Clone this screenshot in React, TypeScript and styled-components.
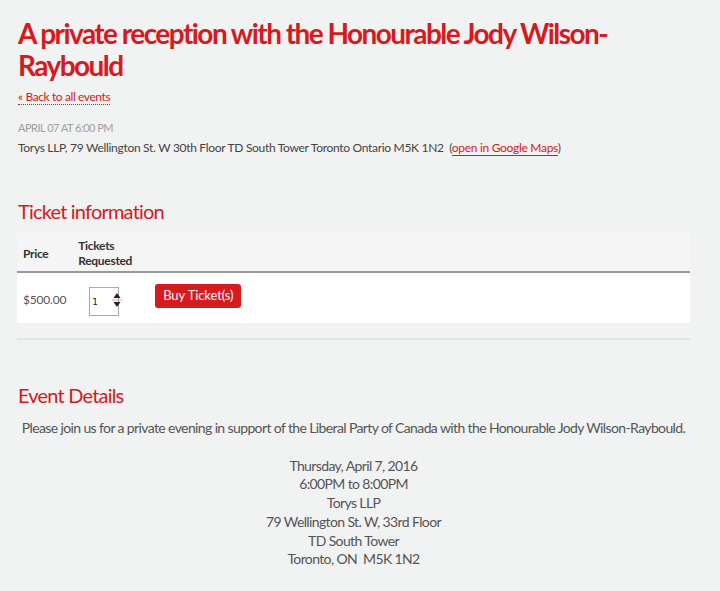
import * as React from 'react';
import styled, { createGlobalStyle } from 'styled-components';

const red = '#d71920';

const GlobalStyle = createGlobalStyle`
  html, body {
    margin: 0;
    padding: 0;
    background: #f1f2f2;
  }
  body {
    font-family: Lato, "Open Sans", sans-serif;
    color: #444;
  }
`;

const Page = styled.div`
  width: 673px;
  padding: 17px 0 20px 17px;
`;

const Title = styled.h1`
  margin: 0 0 0 1px;
  font-size: 28px;
  line-height: 32px;
  font-weight: 700;
  letter-spacing: -1.55px;
  color: ${red};
`;

const BackLink = styled.a`
  display: inline-block;
  margin: 9px 0 0 1px;
  font-size: 12px;
  line-height: 14px;
  color: ${red};
  text-decoration: none;
  letter-spacing: -0.4px;
  border-bottom: 1px dotted ${red};
`;

const Meta = styled.div`
  margin: 16px 0 0 1px;
`;

const DateLine = styled.div`
  font-size: 11px;
  line-height: 14px;
  color: #a0a0a0;
  text-transform: uppercase;
  letter-spacing: -0.5px;
`;

const Address = styled.div`
  margin-top: 5px;
  font-size: 12px;
  line-height: 16px;
  color: #444;
  letter-spacing: -0.3px;
`;

const InlineLink = styled.a`
  color: ${red};
  text-decoration: none;
  border-bottom: 1px solid ${red};
`;

const SectionTitle = styled.h2<{ $top: number }>`
  margin: ${({ $top }) => $top}px 0 0 1px;
  font-size: 20px;
  line-height: 24px;
  font-weight: 400;
  letter-spacing: -0.8px;
  color: ${red};
`;

const Table = styled.table`
  margin-top: 10px;
  width: 100%;
  border-collapse: collapse;
  font-size: 12px;
`;

const HeadRow = styled.tr`
  background: #f5f5f5;
  border-bottom: 2px solid #9a9a9a;
`;

const Th = styled.th<{ $w?: number }>`
  text-align: left;
  vertical-align: middle;
  padding: 5px 6px 3px 6px;
  width: ${({ $w }) => ($w ? `${$w}px` : 'auto')};
  font-weight: 700;
  font-size: 12px;
  line-height: 15px;
  color: #333;
  letter-spacing: -0.3px;
`;

const BodyRow = styled.tr`
  background: #fff;
  border-top: 2px solid #fff;
`;

const Td = styled.td`
  padding: 11px 6px 7px 6px;
  vertical-align: top;
  color: #555;
  font-size: 12px;
  line-height: 16px;
  letter-spacing: -0.2px;
`;

const PriceText = styled.div`
  padding-top: 8px;
`;

const QtyBox = styled.div`
  position: relative;
  display: inline-block;
  width: 30px;
  height: 29px;
  margin: 3px 0 0 11px;
  border: 1px solid #a9a9a9;
  background: #fff;
  box-sizing: border-box;
  vertical-align: top;
`;

const QtyInput = styled.input`
  display: block;
  width: 100%;
  height: 100%;
  border: 0;
  padding: 0 0 0 2px;
  box-sizing: border-box;
  font-family: "DejaVu Sans", sans-serif;
  font-size: 9px;
  color: #222;
  background: transparent;
  outline: none;
`;

const Spinner = styled.svg`
  position: absolute;
  top: 4px;
  right: -4px;
  width: 10px;
  height: 16px;
`;

const BuyButton = styled.button`
  display: block;
  padding: 3px 8px 4px;
  border: 0;
  border-radius: 3px;
  background: ${red};
  color: #fff;
  font-family: Lato, sans-serif;
  font-size: 13px;
  line-height: 17px;
  letter-spacing: -0.1px;
`;

const Divider = styled.hr`
  margin: 15px 0 0;
  border: 0;
  border-top: 2px solid #e3e4e4;
`;

const Details = styled.div`
  margin-top: 12px;
  text-align: center;
  font-size: 14px;
  line-height: 18.7px;
  color: #555;
  letter-spacing: -0.62px;
`;

const Lines = styled.div`
  margin-top: 19px;
`;

const App: React.FC = () => (
  <>
    <GlobalStyle />
    <Page>
      <Title>A private reception with the Honourable Jody Wilson-Raybould</Title>
      <BackLink href="#">« Back to all events</BackLink>
      <Meta>
        <DateLine>April 07 at 6:00 PM</DateLine>
        <Address>
          Torys LLP, 79 Wellington St. W 30th Floor TD South Tower Toronto Ontario M5K 1N2&nbsp; (
          <InlineLink href="#">open in Google Maps</InlineLink>)
        </Address>
      </Meta>

      <SectionTitle $top={43}>Ticket information</SectionTitle>
      <Table>
        <thead>
          <HeadRow>
            <Th $w={43}>Price</Th>
            <Th $w={65}>
              Tickets
              <br />
              Requested
            </Th>
            <Th />
          </HeadRow>
        </thead>
        <tbody>
          <BodyRow>
            <Td>
              <PriceText>$500.00</PriceText>
            </Td>
            <Td>
              <QtyBox>
                <QtyInput readOnly value="1" />
                <Spinner viewBox="0 0 10 16">
                  <path d="M5 1 L8.5 6 L1.5 6 Z" fill="#222" />
                  <line x1="0" y1="8" x2="10" y2="8" stroke="#e7a0a8" strokeWidth="1" />
                  <path d="M5 15 L8.5 10 L1.5 10 Z" fill="#222" />
                </Spinner>
              </QtyBox>
            </Td>
            <Td>
              <BuyButton>Buy Ticket(s)</BuyButton>
            </Td>
          </BodyRow>
        </tbody>
      </Table>
      <Divider />

      <SectionTitle $top={43}>Event Details</SectionTitle>
      <Details>
        Please join us for a private evening in support of the Liberal Party of Canada with the
        Honourable Jody Wilson-Raybould.
        <Lines>
          Thursday, April 7, 2016
          <br />
          6:00PM to 8:00PM
          <br />
          Torys LLP
          <br />
          79 Wellington St. W, 33rd Floor
          <br />
          TD South Tower
          <br />
          Toronto, ON&nbsp; M5K 1N2
        </Lines>
      </Details>
    </Page>
  </>
);

export default App;
